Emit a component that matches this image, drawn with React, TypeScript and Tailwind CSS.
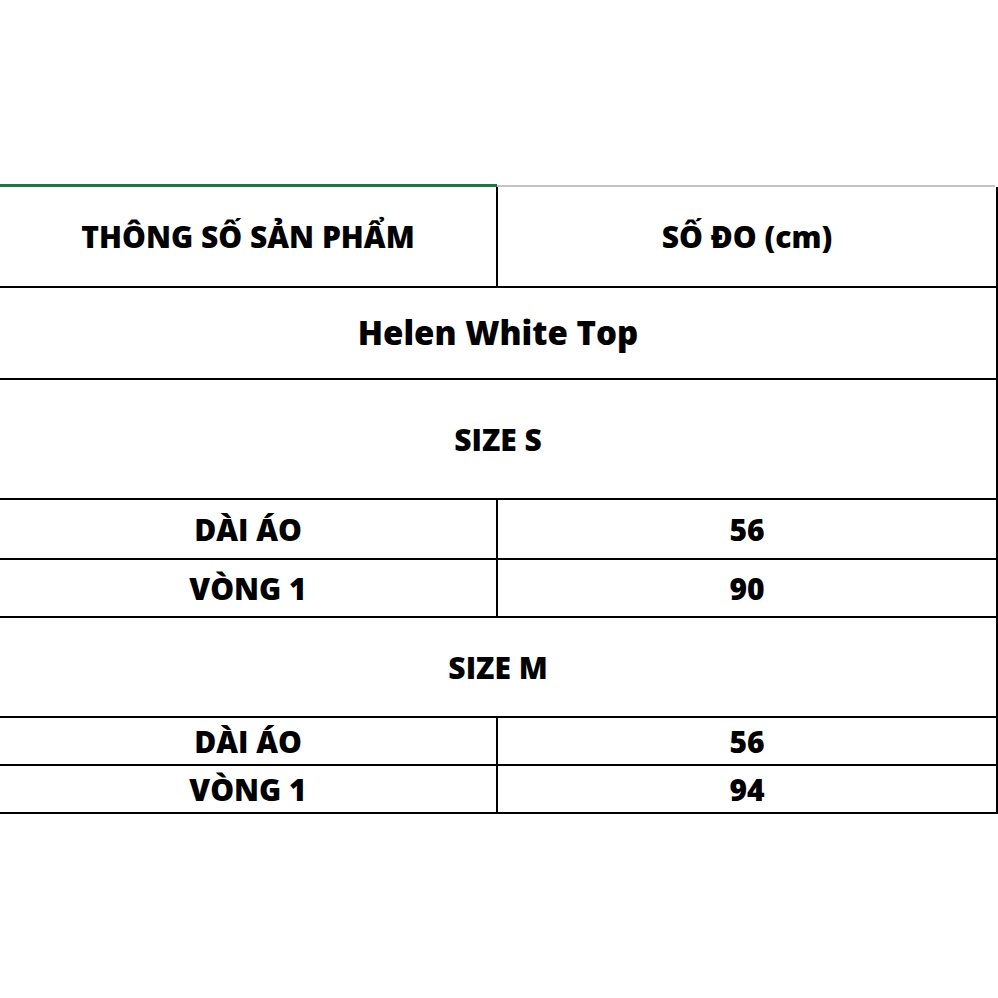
import React from 'react';

const font = { fontFamily: '"Open Sans", "Noto Sans", sans-serif' };

function SplitRow({ h, left, right }: { h: string; left: string; right: string }) {
  return (
    <div className={`flex ${h} border-b-2 border-black`}>
      <div className="w-[498px] flex items-center justify-center border-r-2 border-black">{left}</div>
      <div className="flex-1 flex items-center justify-center">{right}</div>
    </div>
  );
}

function MergedRow({ h, text, big }: { h: string; text: string; big?: boolean }) {
  return (
    <div className={`flex ${h} items-center justify-center border-b-2 border-black ${big ? 'text-[33px]' : ''}`}>{text}</div>
  );
}

export default function App() {
  return (
    <div className="w-[998px] h-[998px] bg-white text-black font-extrabold text-[30px]" style={font}>
      <div className="h-[184px]" />
      {/* top edge: green selected tab line + gray line */}
      <div className="flex h-[3px]">
        <div className="w-[497px] bg-[#227447]" />
        <div className="flex-1 flex flex-col justify-end pr-[3px]">
          <div className="h-[2px] bg-[#c4c4c4]" />
        </div>
      </div>
      <div className="border-r-2 border-black">
        <SplitRow h="h-[101px]" left="THÔNG SỐ SẢN PHẨM" right="SỐ ĐO (cm)" />
        <MergedRow h="h-[92px]" text="Helen White Top" big />
        <MergedRow h="h-[120px]" text="SIZE S" />
        <SplitRow h="h-[60px]" left="DÀI ÁO" right="56" />
        <SplitRow h="h-[58px]" left="VÒNG 1" right="90" />
        <MergedRow h="h-[100px]" text="SIZE M" />
        <SplitRow h="h-[48px]" left="DÀI ÁO" right="56" />
        <SplitRow h="h-[48px]" left="VÒNG 1" right="94" />
      </div>
    </div>
  );
}
